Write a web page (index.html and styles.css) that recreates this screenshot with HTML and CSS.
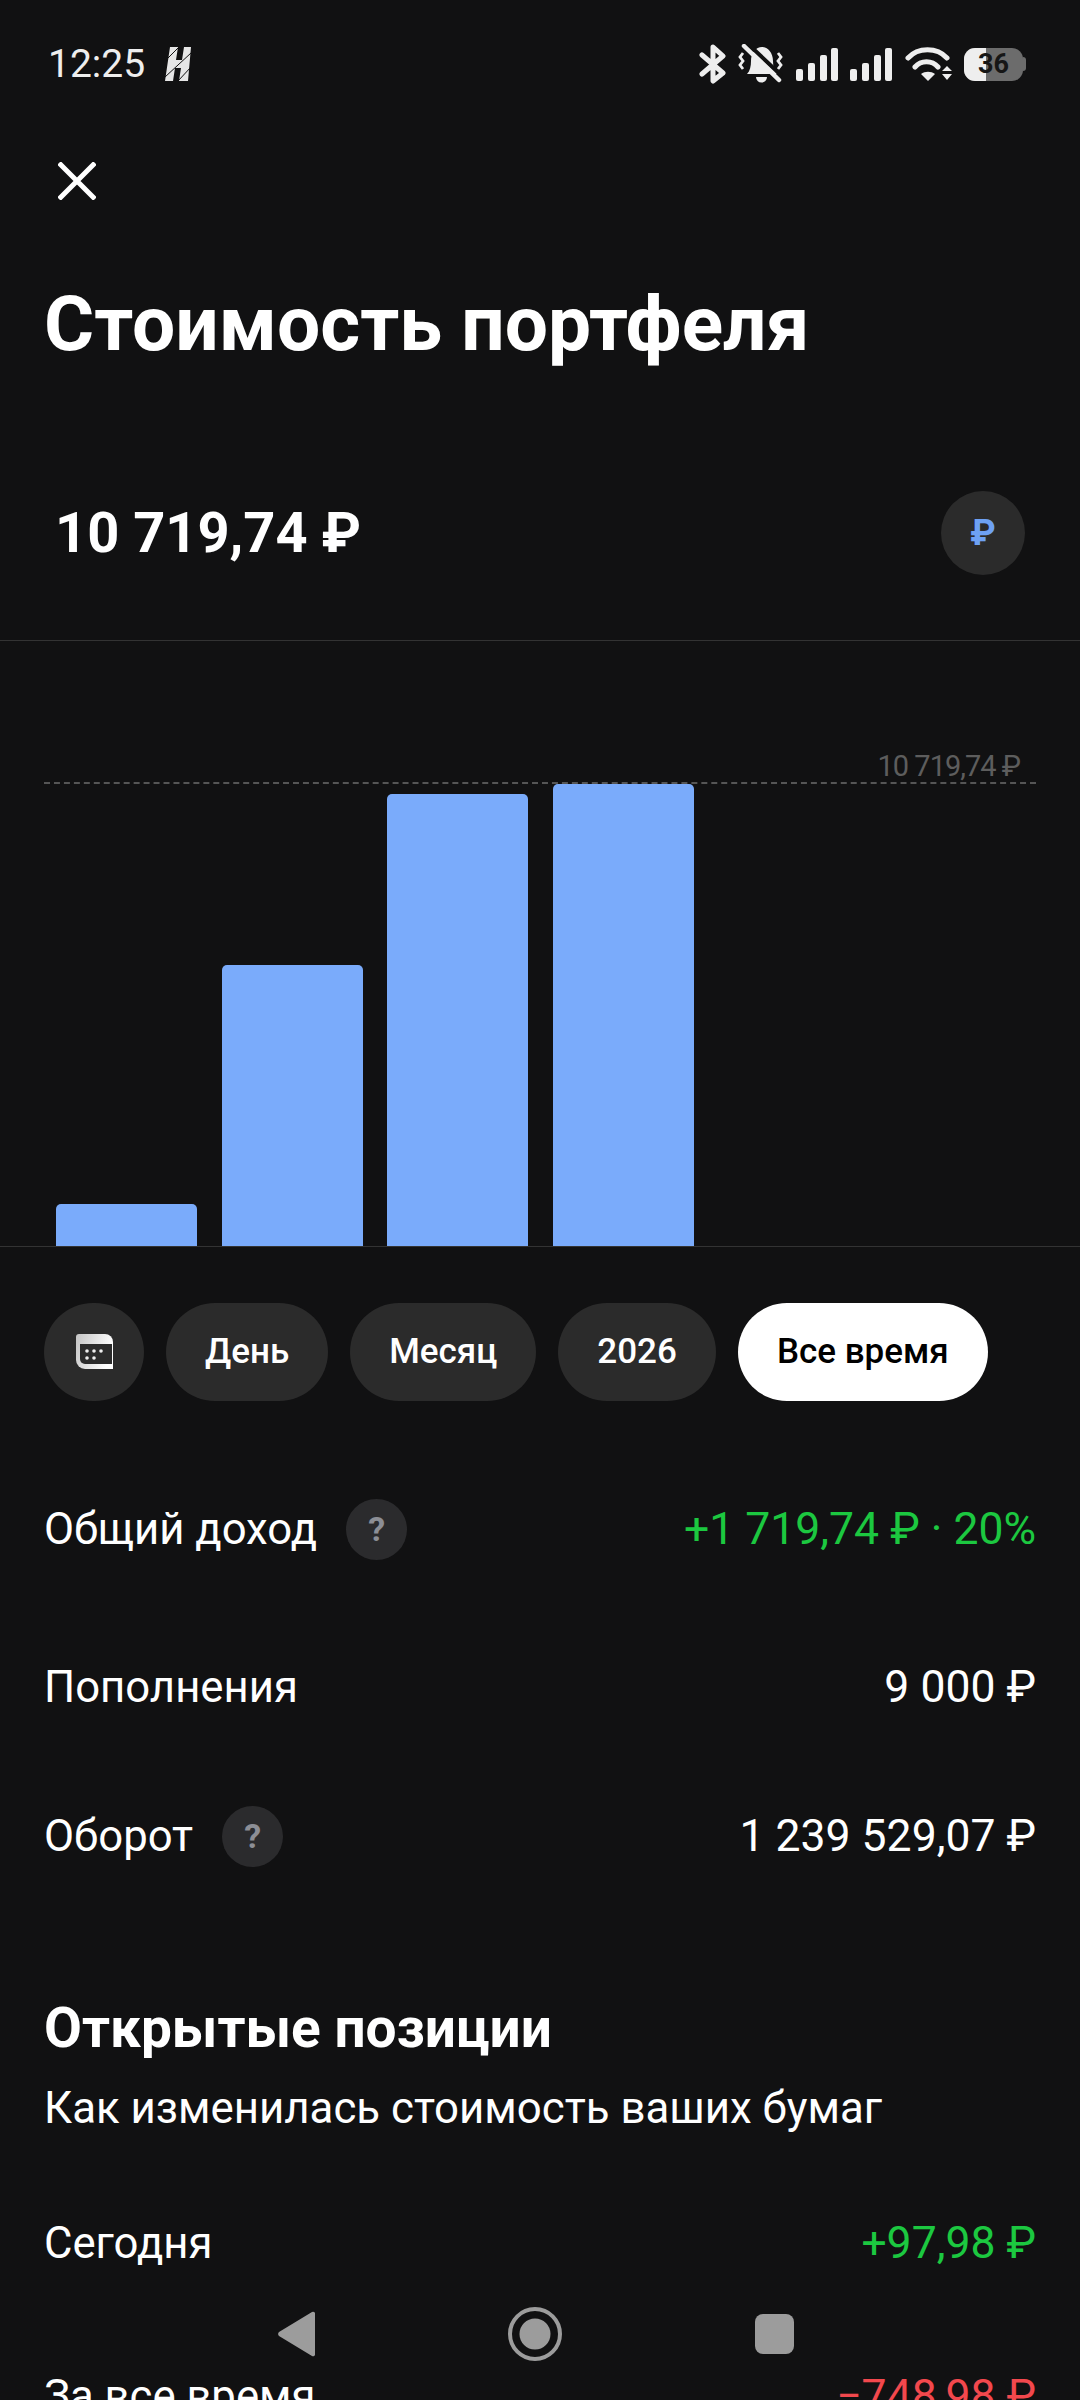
FILE: index.html
```html
<!DOCTYPE html>
<html lang="ru">
<head>
    <meta charset="UTF-8">
    <meta name="viewport" content="width=device-width, initial-scale=1.0">
    <title>Стоимость портфеля</title>
    <link rel="stylesheet" href="styles.css">
</head>
<body>
    <div class="status-bar">
        <div class="status-left">
            <span class="time">12:25</span>
            <svg width="26" height="34" viewBox="0 0 26 34">
                <path d="M5 0h8l-2 13h6L19 0h7l-3 34h-9l2-13h-6l-2 13H0z" fill="#e6e6e6"/>
                <path d="M0 14L13 1M0 30L26 6M13 34L26 20" stroke="#111" stroke-width="1"/>
            </svg>
        </div>
        <div class="status-right">
            <svg width="27" height="40" viewBox="0 0 27 40" fill="none" stroke="#eee" stroke-width="5" stroke-linejoin="round" stroke-linecap="round">
                <path d="M3 11L24 29L14 37V3L24 12L3 30"/>
            </svg>
            <svg width="45" height="41" viewBox="0 0 45 41">
                <path d="M9 30c3-3 4-8 4-13 0-8 5-14 11-14s11 6 11 14c0 5 1 10 4 13z" fill="#eee"/>
                <path d="M18 33h11a5.500 5.500 0 0 1-11 0z" fill="#eee"/>
                <path d="M9 -1L44 32" stroke="#111" stroke-width="4"/>
                <path d="M6 2L41 36" stroke="#eee" stroke-width="4.500" stroke-linecap="round"/>
                <path d="M5 9L2 13l3 4-3 4 3 4M40 9l3 4-3 4 3 4-3 4" fill="none" stroke="#eee" stroke-width="2.800"/>
            </svg>
            <svg width="42" height="33" viewBox="0 0 42 33" fill="#eee">
                <rect x="0" y="21" width="7" height="12" rx="2"/>
                <rect x="12" y="15" width="7" height="18" rx="2"/>
                <rect x="24" y="7" width="7" height="26" rx="2"/>
                <rect x="35" y="0" width="7" height="33" rx="2"/>
            </svg>
            <svg width="42" height="33" viewBox="0 0 42 33" fill="#eee">
                <rect x="0" y="21" width="7" height="12" rx="2"/>
                <rect x="12" y="15" width="7" height="18" rx="2"/>
                <rect x="24" y="7" width="7" height="26" rx="2"/>
                <rect x="35" y="0" width="7" height="33" rx="2"/>
            </svg>
            <svg width="47" height="34" viewBox="0 0 47 34">
                <path d="M3 11C13 0 32 0 42 11M10 20C16 13 27 13 33 20" fill="none" stroke="#eee" stroke-width="5" stroke-linecap="round"/>
                <path d="M16 27c4-3 10-3 14 0l-7 7z" fill="#eee"/>
                <path d="M37 24l5-5 5 5zM37 27h10l-5 6z" fill="#eee"/>
            </svg>
            <div class="battery">
                <div class="battery-body">
                    <div class="battery-fill"></div>
                    <span class="battery-num">36</span>
                </div>
                <div class="battery-nub"></div>
            </div>
        </div>
    </div>

    <svg class="close" width="38" height="38" viewBox="0 0 38 38" fill="none" stroke="#fff" stroke-width="5">
        <path d="M1 1L37 37M37 1L1 37"/>
    </svg>

    <h1 class="title">Стоимость портфеля</h1>

    <div class="balance">
        <span class="balance-sum">10 719,74 ₽</span>
        <div class="currency">₽</div>
    </div>

    <div class="chart">
        <div class="chart-mark">
            <span>10 719,74 ₽</span>
        </div>
        <div class="bars">
            <div class="bar" style="height: 42px"></div>
            <div class="bar" style="height: 281px"></div>
            <div class="bar" style="height: 452px"></div>
            <div class="bar" style="height: 462px"></div>
        </div>
    </div>

    <div class="chips">
        <div class="chip chip-icon">
            <svg width="37" height="35" viewBox="0 0 37 35">
                <defs>
                    <linearGradient id="cal" x1="0" y1="0" x2="1" y2="0.300">
                        <stop offset="0" stop-color="#c4c4c4"/>
                        <stop offset="1" stop-color="#fff"/>
                    </linearGradient>
                </defs>
                <path d="M3 0h26a8 8 0 0 1 8 8v27H9a9 9 0 0 1-9-9V3a3 3 0 0 1 3-3z" fill="url(#cal)"/>
                <path d="M4 10h32v20H9a5 5 0 0 1-5-5z" fill="#2b2b2b"/>
                <g fill="#eee">
                    <circle cx="11" cy="17" r="1.800"/><circle cx="18" cy="17" r="1.800"/><circle cx="25" cy="17" r="1.800"/>
                    <circle cx="11" cy="24" r="1.800"/><circle cx="18" cy="24" r="1.800"/>
                </g>
            </svg>
        </div>
        <div class="chip">День</div>
        <div class="chip">Месяц</div>
        <div class="chip">2026</div>
        <div class="chip active">Все время</div>
    </div>

    <div class="stats">
        <div class="row row-income">
            <div class="row-label">Общий доход <span class="hint">?</span></div>
            <div class="green">+1 719,74 ₽ · 20%</div>
        </div>
        <div class="row row-topup">
            <div class="row-label">Пополнения</div>
            <div>9 000 ₽</div>
        </div>
        <div class="row row-turnover">
            <div class="row-label">Оборот <span class="hint">?</span></div>
            <div>1 239 529,07 ₽</div>
        </div>
    </div>

    <h2 class="section-title">Открытые позиции</h2>
    <p class="section-sub">Как изменилась стоимость ваших бумаг</p>

    <div class="row row-today">
        <div class="row-label">Сегодня</div>
        <div class="green">+97,98 ₽</div>
    </div>
    <div class="row row-all">
        <div class="row-label">За все время</div>
        <div class="red">−748,98 ₽</div>
    </div>

    <div class="nav-bar">
        <svg width="38" height="46" viewBox="0 0 38 46"><path d="M35 1a2 2 0 0 1 3 2v40a2 2 0 0 1-3 2L2 25a3 3 0 0 1 0-4z" fill="#9c9c9c"/></svg>
        <svg width="54" height="54" viewBox="0 0 54 54">
            <circle cx="27" cy="27" r="25" fill="none" stroke="#9c9c9c" stroke-width="4"/>
            <circle cx="27" cy="27" r="15.500" fill="#9c9c9c"/>
        </svg>
        <div class="nav-square"></div>
    </div>
</body>
</html>
```

FILE: styles.css
```css
* {
    margin: 0;
    padding: 0;
    box-sizing: border-box;
}

html, body {
    height: 2400px;
    overflow: hidden;
}

body {
    background: #111112;
    color: #fff;
    font-family: Roboto, 'Noto Sans', sans-serif;
    position: relative;
}

.status-bar {
    display: flex;
    justify-content: space-between;
    align-items: center;
    height: 34px;
    margin-top: 47px;
    padding: 0 54px 0 48px;
}

.status-left {
    display: flex;
    align-items: center;
    gap: 20px;
}

.time {
    font-size: 39px;
    line-height: 34px;
    color: #eee;
}

.status-right {
    display: flex;
    align-items: center;
    gap: 12.5px;
}

.battery {
    display: flex;
    align-items: center;
}

.battery-body {
    position: relative;
    width: 59px;
    height: 33px;
    border-radius: 11px;
    background: #6c6c6c;
    overflow: hidden;
}

.battery-fill {
    width: 22px;
    height: 100%;
    background: #eee;
}

.battery-num {
    position: absolute;
    left: 14px;
    top: 0;
    font-size: 27px;
    line-height: 33px;
    font-weight: 700;
    color: #161616;
}

.battery-nub {
    width: 3px;
    height: 14px;
    border-radius: 0 3px 3px 0;
    background: #6c6c6c;
}

.close {
    display: block;
    margin: 81px 0 0 58px;
}

.title {
    margin: 82px 0 0 44px;
    font-size: 76.7px;
    line-height: 84px;
    font-weight: 700;
}

.balance {
    display: flex;
    justify-content: space-between;
    align-items: center;
    height: 84px;
    margin: 125px 55px 0 55px;
}

.balance-sum {
    font-size: 56px;
    font-weight: 700;
}

.currency {
    width: 84px;
    height: 84px;
    border-radius: 50%;
    background: #2b2b2b;
    color: #6ea1f3;
    font-size: 36px;
    font-weight: 700;
    line-height: 84px;
    text-align: center;
}

.chart {
    margin-top: 65px;
    height: 607px;
    border-top: 1px solid #333;
    border-bottom: 1px solid #333;
    display: flex;
    flex-direction: column;
}

.chart-mark {
    height: 144px;
    margin: 0 44px;
    border-bottom: 2px dashed #555;
    display: flex;
    justify-content: flex-end;
    align-items: flex-end;
    padding: 0 16px 0 0;
    color: #5d5d5d;
    font-size: 29px;
    line-height: 32px;
    letter-spacing: -1px;
}

.bars {
    flex: 1;
    display: flex;
    align-items: flex-end;
    gap: 24.5px;
    padding-left: 56px;
}

.bar {
    width: 141px;
    background: #7aabfb;
    border-radius: 5px 5px 0 0;
}

.chips {
    display: flex;
    gap: 22px;
    margin: 55.5px 0 0 44px;
}

.chip {
    height: 98px;
    padding: 0 39px;
    border-radius: 49px;
    background: #2b2b2b;
    font-size: 35px;
    font-weight: 500;
    display: flex;
    align-items: center;
}

.chip-icon {
    width: 100px;
    padding: 0;
    justify-content: center;
}

.chip.active {
    background: #fff;
    color: #000;
}

.row {
    display: flex;
    justify-content: space-between;
    align-items: center;
    margin: 0 44px;
    font-size: 44.5px;
    line-height: 61px;
}

.row-label {
    display: flex;
    align-items: center;
    gap: 29px;
    font-size: 43.7px;
}

.hint {
    width: 61px;
    height: 61px;
    border-radius: 50%;
    background: #2b2b2d;
    color: #8c8e95;
    font-size: 34px;
    font-weight: 700;
    line-height: 61px;
    text-align: center;
}

.row-income {
    margin-top: 98px;
}

.row-topup {
    margin-top: 97px;
}

.row-turnover {
    margin-top: 88px;
}

.green {
    color: #1cc840;
}

.red {
    color: #f2484d;
}

.section-title {
    margin: 130px 0 0 44px;
    font-size: 55px;
    line-height: 62px;
    font-weight: 700;
}

.section-sub {
    margin: 18px 0 0 44px;
    font-size: 43.8px;
    line-height: 62px;
}

.row-today {
    margin-top: 74px;
}

.row-all {
    margin-top: 92px;
}

/* system nav sits over the page content */
.nav-bar {
    position: absolute;
    left: 277px;
    top: 2307px;
    width: 517px;
    height: 54px;
    display: flex;
    justify-content: space-between;
    align-items: center;
}

.nav-square {
    width: 39px;
    height: 40px;
    border-radius: 8px;
    background: #9c9c9c;
}
```
